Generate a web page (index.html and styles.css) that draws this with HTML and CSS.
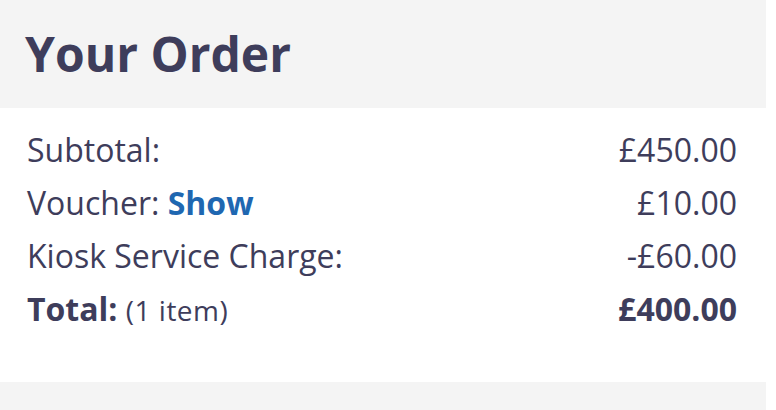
FILE: index.html
```html
<!DOCTYPE html>
<html>
<head>
<meta charset="utf-8">
<link rel="stylesheet" href="styles.css">
</head>
<body>
<div class="order">
  <div class="order-header">
    <h1 class="order-title">Your Order</h1>
  </div>
  <div class="order-body">
    <div class="row"><span>Subtotal:</span><span>£450.00</span></div>
    <div class="row"><span>Voucher: <a class="link" href="#">Show</a></span><span>£10.00</span></div>
    <div class="row"><span>Kiosk Service Charge:</span><span>-£60.00</span></div>
    <div class="row total"><span><strong>Total:</strong> <span class="count">(1 item)</span></span><strong>£400.00</strong></div>
  </div>
  <div class="order-footer"></div>
</div>
</body>
</html>
```
FILE: styles.css
```css
html, body {
  margin: 0;
  padding: 0;
  background: #ffffff;
}
body {
  font-family: "Open Sans", sans-serif;
  color: #3e3d5b;
}
.order {
  width: 766px;
}
.order-header {
  background: #f4f4f4;
  height: 108px;
  display: flex;
  align-items: center;
  padding-left: 25px;
  box-sizing: border-box;
}
.order-title {
  margin: 0;
  font-size: 48px;
  font-weight: 700;
  line-height: 1;
}
.order-body {
  padding: 15px 29px 0 27px;
  height: 274px;
  box-sizing: border-box;
}
.row {
  display: flex;
  justify-content: space-between;
  font-size: 32px;
  line-height: 53px;
}
.link {
  color: #1f67b1;
  font-weight: 700;
  text-decoration: none;
}
.total strong {
  font-weight: 700;
}
.count {
  font-size: 28px;
  letter-spacing: 0.5px;
}
.order-footer {
  background: #f4f4f4;
  height: 28px;
}
```
